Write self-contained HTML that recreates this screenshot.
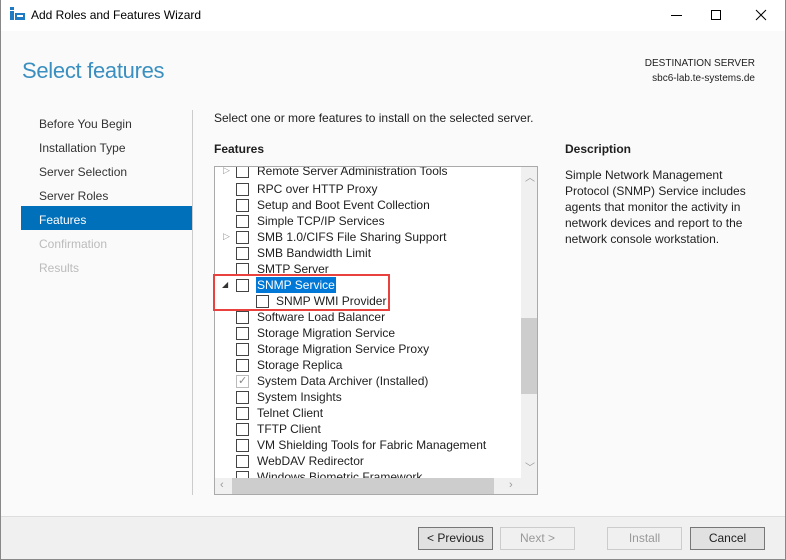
<!DOCTYPE html><html><head><style>
*{margin:0;padding:0;box-sizing:border-box}
body{width:786px;height:560px;overflow:hidden;font-family:"Liberation Sans",sans-serif;font-size:12px;color:#1e1e1e;background:#fafafa;position:relative}
.a{position:absolute;white-space:nowrap}
.cb{position:absolute;width:13px;height:13px;border:1px solid #444;background:#fff}
</style></head><body>
<div class="a" style="left:0;top:0;width:786px;height:31px;background:#fff"></div>
<svg class="a" style="left:10px;top:7px" width="16" height="16"><rect x="0" y="0" width="4" height="3" fill="#1f7ac4"/><rect x="0" y="4" width="4" height="9" fill="#1f7ac4"/><rect x="5" y="6" width="10" height="7" fill="#1f7ac4"/><rect x="7" y="8" width="6" height="2" fill="#fff"/></svg>
<div class="a" style="left:31px;top:8px;font-size:12px;color:#000">Add Roles and Features Wizard</div>
<div class="a" style="left:671px;top:15px;width:11px;height:1px;background:#000"></div>
<div class="a" style="left:711px;top:10px;width:10px;height:10px;border:1px solid #000"></div>
<svg class="a" style="left:755px;top:9px" width="12" height="12"><path d="M1 1L11 11M11 1L1 11" stroke="#000" stroke-width="1"/></svg>
<div class="a" style="left:22px;top:58px;font-size:22px;color:#3a8fc0;letter-spacing:-0.3px">Select features</div>
<div class="a" style="right:31px;top:56px;font-size:10px;text-align:right;line-height:15px">DESTINATION SERVER<br>sbc6-lab.te-systems.de</div>
<div class="a" style="left:21px;top:206px;width:171px;height:24px;background:#0070bb"></div>
<div class="a" style="left:39px;top:112px;line-height:24px;font-size:12px;color:#333">Before You Begin<br>Installation Type<br>Server Selection<br>Server Roles<br><span style="color:#fff">Features</span><br><span style="color:#bbb">Confirmation</span><br><span style="color:#bbb">Results</span></div>
<div class="a" style="left:192px;top:110px;width:1px;height:385px;background:#ccc"></div>
<div class="a" style="left:214px;top:111px">Select one or more features to install on the selected server.</div>
<div class="a" style="left:214px;top:142px;font-weight:bold">Features</div>
<div class="a" style="left:565px;top:142px;font-weight:bold">Description</div>
<div class="a" style="left:565px;top:167px;line-height:16px;white-space:normal;width:200px">Simple Network Management Protocol (SNMP) Service includes agents that monitor the activity in network devices and report to the network console workstation.</div>
<div class="a" style="left:214px;top:166px;width:324px;height:329px;border:1px solid #aaa;background:#fff;overflow:hidden">
<div class="a" style="left:306px;top:0;width:16px;height:311px;background:#f0f0f0"></div>
<div class="a" style="left:306px;top:151px;width:16px;height:76px;background:#cdcdcd"></div>
<div class="a" style="left:0;top:311px;width:322px;height:16px;background:#f0f0f0"></div>
<div class="a" style="left:17px;top:311px;width:262px;height:16px;background:#cdcdcd"></div>
<div class="a" style="left:310px;top:2px;color:#999;font-size:10px">︿</div>
<div class="a" style="left:310px;top:292px;color:#999;font-size:10px">﹀</div>
<div class="a" style="left:5px;top:312px;color:#999;font-size:11px">‹</div>
<div class="a" style="left:294px;top:312px;color:#999;font-size:11px">›</div>
<div class="a" style="left:0;top:0;width:306px;height:311px;overflow:hidden">
<div id="rows"></div>
</div></div>
<div class="a" style="left:213px;top:274px;width:177px;height:37px;border:2px solid #e8413e"></div>
<div class="a" style="left:0;top:516px;width:786px;height:44px;background:#f0f0f0;border-top:1px solid #ddd"></div>
<div class="a" style="left:418px;top:527px;width:75px;height:23px;border:1px solid #777;background:#e1e1e1;text-align:center;line-height:21px">&lt; Previous</div>
<div class="a" style="left:500px;top:527px;width:75px;height:23px;border:1px solid #ccc;background:#f0f0f0;color:#999;text-align:center;line-height:21px">Next &gt;</div>
<div class="a" style="left:607px;top:527px;width:75px;height:23px;border:1px solid #ccc;background:#f0f0f0;color:#999;text-align:center;line-height:21px">Install</div>
<div class="a" style="left:690px;top:527px;width:75px;height:23px;border:1px solid #777;background:#e1e1e1;text-align:center;line-height:21px">Cancel</div>
<div class="a" style="left:0;top:0;width:786px;height:560px;border:1px solid #888;border-top:none"></div>
<script>
var r=[["Remote Server Administration Tools",1],["RPC over HTTP Proxy"],["Setup and Boot Event Collection"],["Simple TCP/IP Services"],["SMB 1.0/CIFS File Sharing Support",1],["SMB Bandwidth Limit"],["SMTP Server"],["SNMP Service",2],["SNMP WMI Provider",3],["Software Load Balancer"],["Storage Migration Service"],["Storage Migration Service Proxy"],["Storage Replica"],["System Data Archiver (Installed)",4],["System Insights"],["Telnet Client"],["TFTP Client"],["VM Shielding Tools for Fabric Management"],["WebDAV Redirector"],["Windows Biometric Framework"]];
var h="";r.forEach(function(x,i){var t=-2+16*i,c=x[1]==3?41:21,tx=x[1]==3?61:42;
if(i==0)t=-4;
if(x[1]==1)h+='<div class="a" style="left:8px;top:'+(t+2)+'px;color:#999;font-size:9px">▷</div>';
if(x[1]==2)h+='<div class="a" style="left:7px;top:'+(t+3)+'px;color:#333;font-size:8px">◢</div>';
h+='<div class="cb" style="left:'+c+'px;top:'+(t+2)+'px;'+(x[1]==4?'border-color:#bbb;':'')+'">'+(x[1]==4?'<span style="position:absolute;left:1px;top:-2px;font-size:11px;color:#888">✓</span>':'')+'</div>';
h+='<div class="a" style="left:'+tx+'px;top:'+t+'px;line-height:16px;'+(x[1]==2?'background:#0078d7;color:#fff;padding:0 1px;margin-left:-1px;':'')+'">'+x[0]+'</div>';});
document.getElementById("rows").innerHTML=h;
</script>
</body></html>
